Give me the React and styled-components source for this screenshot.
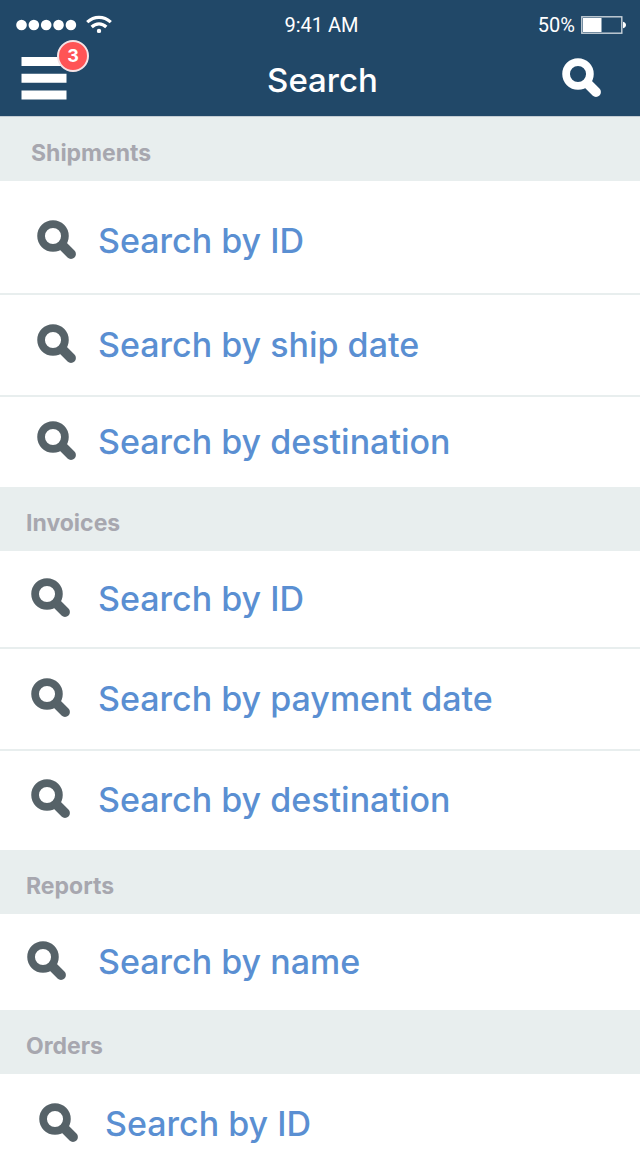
import React from "react";
import styled, { createGlobalStyle } from "styled-components";

const GlobalStyle = createGlobalStyle`
  *, *::before, *::after { box-sizing: border-box; }
  body {
    margin: 0;
    background: #ffffff;
    font-family: Inter, "Open Sans", sans-serif;
  }
`;

const Header = styled.header`
  background: #214868;
  border-bottom: 1px solid #c3ccd3;
  color: #ffffff;
`;

const StatusBar = styled.div`
  display: grid;
  grid-template-columns: 1fr auto 1fr;
  align-items: center;
  height: 49px;
  padding: 0 13px 0 16px;
  font: 400 20px/24px Roboto, sans-serif;
`;

const StatusGroup = styled.div`
  display: flex;
  align-items: center;
  gap: ${(p) => p.$gap};
  justify-self: ${(p) => p.$align};
`;

const NavBar = styled.div`
  display: grid;
  grid-template-columns: 1fr auto 1fr;
  align-items: center;
  height: 67px;
  padding: 0 38px 9px 21px;
`;

const Title = styled.h1`
  margin: 4px 0 0 22px;
  font-size: 33px;
  line-height: 40px;
  font-weight: 500;
`;

const IconButton = styled.button`
  position: relative;
  display: flex;
  justify-self: ${(p) => p.$align};
  padding: 0;
  border: 0;
  background: none;
  color: inherit;
  cursor: pointer;
`;

const Badge = styled.span`
  position: absolute;
  top: -17px;
  left: 36px;
  width: 32px;
  height: 32px;
  border: 2px solid #f6e3e6;
  border-radius: 50%;
  background: #ff5456;
  font: 700 18px/28px Inter, sans-serif;
  text-align: center;
`;

const SectionTitle = styled.h2`
  margin: 0;
  padding: 22px ${(p) => p.$inset} 14px;
  background: #e8eeee;
  color: #a7a7af;
  font-size: 23px;
  line-height: 28px;
  font-weight: 700;
`;

const List = styled.ul`
  margin: 0;
  padding: 0;
  list-style: none;
`;

const Item = styled.li`
  & + & { border-top: 2px solid #e8eeee; }
`;

const RowLink = styled.a`
  display: grid;
  grid-template-columns: ${(p) => p.$iconColumn} 1fr;
  align-items: center;
  padding: ${(p) => p.$space} 16px ${(p) => p.$spaceBelow || p.$space} ${(p) => p.$inset};
  color: #5a8fd2;
  font-size: 34px;
  line-height: 42px;
  font-weight: 500;
  text-decoration: none;

  svg {
    margin-bottom: 2px;
    color: #566268;
  }
`;

const SearchIcon = () => (
  <svg width="40" height="40" viewBox="0 0 40 40" fill="none" stroke="currentColor" aria-hidden="true">
    <circle cx="16" cy="16" r="11.9" strokeWidth="7.7" />
    <path d="M25.5 25.5 34 34" strokeWidth="9.8" strokeLinecap="round" />
  </svg>
);

const MenuIcon = () => (
  <svg width="46" height="43" viewBox="0 0 46 43" fill="currentColor" aria-hidden="true">
    <path d="M0.5 0h45v9h-45zM0.5 16.7h45v9h-45zM0.5 33.4h45v9h-45z" />
  </svg>
);

const SignalIcon = () => (
  <svg width="61" height="12" viewBox="0 0 61 12" fill="currentColor" aria-hidden="true">
    {[0, 1, 2, 3, 4].map((i) => (
      <circle key={i} cx={5.5 + i * 12.35} cy="6" r="5.3" />
    ))}
  </svg>
);

const WifiIcon = () => (
  <svg width="26" height="19" viewBox="0 0 26 19" fill="none" stroke="currentColor" aria-hidden="true">
    <path d="M1.2 7.2Q6.5 2.3 13 2.3T24.8 7.2" strokeWidth="3.2" />
    <path d="M5.7 12Q9 8.8 13 8.8T20.3 12" strokeWidth="3.2" />
    <circle cx="13" cy="15.9" r="2.2" fill="currentColor" stroke="none" />
  </svg>
);

const BatteryIcon = () => (
  <svg width="46" height="18" viewBox="0 0 46 18" aria-hidden="true">
    <rect x="0.8" y="0.8" width="40" height="16.4" fill="none" stroke="#c9d2da" strokeWidth="1.4" />
    <rect x="2" y="2" width="18.5" height="14" fill="#ffffff" />
    <path d="M42 5.8c4 0.8 4 5.6 0 6.4z" fill="#ffffff" />
  </svg>
);

const sections = [
  {
    title: "Shipments",
    titleInset: "31px",
    inset: "37px",
    iconColumn: "61px",
    rows: [
      { label: "Search by ID", space: "39px", below: "31px" },
      { label: "Search by ship date", space: "29px" },
      { label: "Search by destination", space: "24px" },
    ],
  },
  {
    title: "Invoices",
    titleInset: "26px",
    inset: "31px",
    iconColumn: "67px",
    rows: [
      { label: "Search by ID", space: "27px" },
      { label: "Search by payment date", space: "29px" },
      { label: "Search by destination", space: "28px", below: "29px" },
    ],
  },
  {
    title: "Reports",
    titleInset: "26px",
    inset: "27px",
    iconColumn: "71px",
    rows: [{ label: "Search by name", space: "27px" }],
  },
  {
    title: "Orders",
    titleInset: "26px",
    inset: "39px",
    iconColumn: "66px",
    rows: [{ label: "Search by ID", space: "29px" }],
  },
];

export default function App() {
  return (
    <>
      <GlobalStyle />
      <Header>
        <StatusBar>
          <StatusGroup $gap="9px" $align="start">
            <SignalIcon />
            <WifiIcon />
          </StatusGroup>
          <span>9:41 AM</span>
          <StatusGroup $gap="6px" $align="end">
            <span>50%</span>
            <BatteryIcon />
          </StatusGroup>
        </StatusBar>
        <NavBar>
          <IconButton type="button" aria-label="Menu, 3 notifications" $align="start">
            <MenuIcon />
            <Badge>3</Badge>
          </IconButton>
          <Title>Search</Title>
          <IconButton type="button" aria-label="Search" $align="end">
            <SearchIcon />
          </IconButton>
        </NavBar>
      </Header>
      <main>
        {sections.map((section) => (
          <section key={section.title}>
            <SectionTitle $inset={section.titleInset}>{section.title}</SectionTitle>
            <List>
              {section.rows.map((row) => (
                <Item key={row.label}>
                  <RowLink
                    href="#"
                    $inset={section.inset}
                    $iconColumn={section.iconColumn}
                    $space={row.space}
                    $spaceBelow={row.below}
                  >
                    <SearchIcon />
                    <span>{row.label}</span>
                  </RowLink>
                </Item>
              ))}
            </List>
          </section>
        ))}
      </main>
    </>
  );
}
